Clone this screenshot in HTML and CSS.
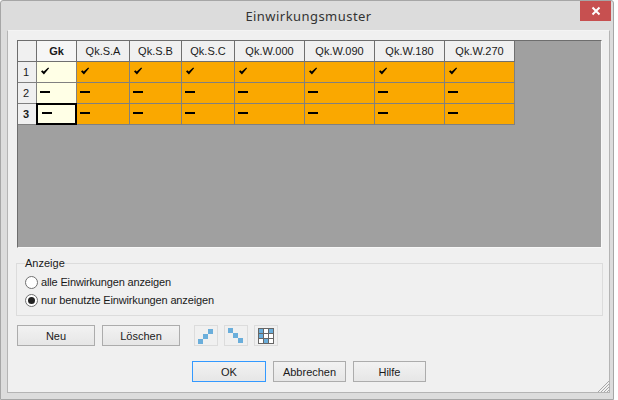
FILE: index.html
```html
<!DOCTYPE html>
<html lang="de">
<head>
  <meta charset="UTF-8">
  <title>Einwirkungsmuster</title>
  <link rel="stylesheet" href="styles.css">
</head>
<body>
  <svg class="defs" width="0" height="0">
    <symbol id="check" viewBox="0 0 10 9">
      <path d="M0.5 5 L2 3.6 L3.6 5.2 L8.6 0.6 L9.6 1.4 L3.8 8.4 Z" fill="#000"/>
    </symbol>
  </svg>

  <div class="window">
    <header class="titlebar">
      <h1>Einwirkungsmuster</h1>
      <button class="close" type="button" aria-label="Schließen">
        <svg width="10" height="10" viewBox="0 0 10 10">
          <path d="M1.5 1.5 L8.5 8.5 M8.5 1.5 L1.5 8.5" stroke="#fff" stroke-width="2"/>
        </svg>
      </button>
    </header>

    <main class="client">
      <div class="grid">
        <div class="cell head"></div>
        <div class="cell head gk">Gk</div>
        <div class="cell head">Qk.S.A</div>
        <div class="cell head">Qk.S.B</div>
        <div class="cell head">Qk.S.C</div>
        <div class="cell head">Qk.W.000</div>
        <div class="cell head">Qk.W.090</div>
        <div class="cell head">Qk.W.180</div>
        <div class="cell head">Qk.W.270</div>

        <div class="cell rowhead">1</div>
        <div class="cell yes"><svg class="tick"><use href="#check"/></svg></div>
        <div class="cell on"><svg class="tick"><use href="#check"/></svg></div>
        <div class="cell on"><svg class="tick"><use href="#check"/></svg></div>
        <div class="cell on"><svg class="tick"><use href="#check"/></svg></div>
        <div class="cell on"><svg class="tick"><use href="#check"/></svg></div>
        <div class="cell on"><svg class="tick"><use href="#check"/></svg></div>
        <div class="cell on"><svg class="tick"><use href="#check"/></svg></div>
        <div class="cell on"><svg class="tick"><use href="#check"/></svg></div>

        <div class="cell rowhead">2</div>
        <div class="cell yes"><span class="dash"></span></div>
        <div class="cell on"><span class="dash"></span></div>
        <div class="cell on"><span class="dash"></span></div>
        <div class="cell on"><span class="dash"></span></div>
        <div class="cell on"><span class="dash"></span></div>
        <div class="cell on"><span class="dash"></span></div>
        <div class="cell on"><span class="dash"></span></div>
        <div class="cell on"><span class="dash"></span></div>

        <div class="cell rowhead current">3</div>
        <div class="cell yes active"><span class="dash"></span></div>
        <div class="cell on"><span class="dash"></span></div>
        <div class="cell on"><span class="dash"></span></div>
        <div class="cell on"><span class="dash"></span></div>
        <div class="cell on"><span class="dash"></span></div>
        <div class="cell on"><span class="dash"></span></div>
        <div class="cell on"><span class="dash"></span></div>
        <div class="cell on"><span class="dash"></span></div>
      </div>

      <fieldset class="group">
        <legend>Anzeige</legend>
        <label class="radio"><span class="dot"></span>alle Einwirkungen anzeigen</label>
        <label class="radio"><span class="dot checked"></span>nur benutzte Einwirkungen anzeigen</label>
      </fieldset>

      <div class="tools">
        <button class="btn" type="button">Neu</button>
        <button class="btn" type="button">Löschen</button>
        <div class="icons">
          <button class="icon" type="button" aria-label="Alle auswählen">
            <svg width="16" height="16" viewBox="0 0 16 16">
              <rect x="0" y="11" width="5" height="5" fill="#6aaedb"/>
              <rect x="5" y="6" width="5" height="5" fill="#6aaedb"/>
              <rect x="10" y="1" width="5" height="5" fill="#6aaedb"/>
            </svg>
          </button>
          <button class="icon" type="button" aria-label="Keine auswählen">
            <svg width="16" height="16" viewBox="0 0 16 16">
              <rect x="0" y="0" width="5" height="5" fill="#6aaedb"/>
              <rect x="5" y="5" width="5" height="5" fill="#6aaedb"/>
              <rect x="10" y="10" width="5" height="5" fill="#6aaedb"/>
            </svg>
          </button>
          <button class="icon" type="button" aria-label="Umkehren">
            <svg width="16" height="16" viewBox="0 0 16 16">
              <rect x="0.5" y="0.5" width="15" height="15" fill="#fff" stroke="#666"/>
              <rect x="1" y="1" width="4" height="4" fill="#6aaedb"/>
              <rect x="11" y="1" width="4" height="4" fill="#6aaedb"/>
              <rect x="1" y="6" width="4" height="4" fill="#6aaedb"/>
              <rect x="6" y="11" width="4" height="4" fill="#6aaedb"/>
              <path d="M5.5 1 V15 M10.5 1 V15 M1 5.5 H15 M1 10.5 H15" stroke="#666"/>
            </svg>
          </button>
        </div>
      </div>

      <footer class="actions">
        <button class="btn wide default" type="button">OK</button>
        <button class="btn wide" type="button">Abbrechen</button>
        <button class="btn wide" type="button">Hilfe</button>
      </footer>

      <svg class="grip" width="11" height="11" viewBox="0 0 11 11">
        <path d="M11 0 L0 11 M11 3 L3 11 M11 6 L6 11 M11 9 L9 11" stroke="#a8a8a8"/>
      </svg>
    </main>
  </div>
</body>
</html>
```

FILE: styles.css
```css
* {
  box-sizing: border-box;
}

html, body {
  margin: 0;
  padding: 0;
  height: 400px;
  overflow: hidden;
  background-color: #fff;
}

body {
  font-family: "Liberation Sans", Arial, sans-serif;
  font-size: 11px;
  color: #1a1a1a;
}

.defs {
  position: absolute;
}

.window {
  position: relative;
  width: 614px;
  height: 400px;
  padding: 0 3px 6px 6px;
  display: flex;
  flex-direction: column;
  background-color: #dcdcdc;
  border: 1px solid #a6a6a6;
  border-radius: 3px 3px 0 0;
}

.titlebar {
  height: 29px;
  flex: none;
  display: flex;
  align-items: center;
  justify-content: center;
}

.titlebar h1 {
  margin: 0;
  font-family: "Noto Sans", sans-serif;
  font-size: 13px;
  font-weight: 400;
  letter-spacing: 0.45px;
  color: #333;
}

.close {
  position: absolute;
  top: 0;
  right: 2px;
  width: 31px;
  height: 20px;
  padding: 0;
  display: flex;
  align-items: center;
  justify-content: center;
  background-color: #c75050;
  border: none;
}

.client {
  position: relative;
  flex: 1;
  padding: 9px 7px 0 9px;
  background-color: #f0f0f0;
  border: 1px solid #b4b4b4;
  border-top-color: #f4f4f4;
}

.grid {
  height: 208px;
  display: grid;
  grid-template-columns: 19px 40px 53px 52px 53px 70px 70px 70px 70px;
  grid-auto-rows: 21px;
  align-content: start;
  background-color: #a0a0a0;
  border: 1px solid #6d6d6d;
  border-right-color: #f8f8f8;
  border-bottom-color: #f8f8f8;
}

.cell {
  display: flex;
  align-items: center;
  padding-left: 3px;
  border-right: 1px solid #808080;
  border-bottom: 1px solid #808080;
}

.head {
  justify-content: center;
  padding-left: 0;
  background-color: #f0f0f0;
  border-right-color: #6f6f6f;
  border-bottom-color: #6f6f6f;
}

.gk {
  font-weight: 700;
  background-color: #f6f6f6;
}

.rowhead {
  background-color: #f0f0f0;
  padding-left: 5px;
}

.current {
  font-weight: 700;
}

.yes {
  background-color: #ffffe6;
}

.on {
  background-color: #faa800;
}

.active {
  border: 2px solid #000;
  margin: -1px 0 0 -1px;
  padding-left: 4px;
}

.tick {
  width: 10px;
  height: 8px;
  margin-bottom: 3px;
}

.dash {
  width: 10px;
  height: 2px;
  margin-bottom: 2px;
  background-color: #000;
}

.group {
  height: 60px;
  margin: 8px -1px 0 -1px;
  padding: 3px 0 0 8px;
  border: 1px solid #dcdcdc;
}

.group legend {
  padding: 0;
  margin-left: 0;
  line-height: 14px;
}

.radio {
  height: 18px;
  display: flex;
  align-items: center;
  gap: 3px;
  letter-spacing: -0.15px;
  white-space: nowrap;
}

.dot {
  width: 13px;
  height: 13px;
  display: flex;
  align-items: center;
  justify-content: center;
  background-color: #fff;
  border: 1px solid #707070;
  border-radius: 50%;
}

.checked::after {
  content: "";
  width: 7px;
  height: 7px;
  background-color: #222;
  border-radius: 50%;
}

.tools {
  margin-top: 9px;
  display: flex;
  gap: 7px;
}

.btn {
  width: 78px;
  height: 21px;
  padding: 0;
  font-family: inherit;
  font-size: 11px;
  color: #1a1a1a;
  background: linear-gradient(#f2f2f2, #e6e6e6);
  border: 1px solid #acacac;
}

.icons {
  display: flex;
  gap: 6px;
  margin-left: 7px;
}

.icon {
  width: 24px;
  height: 21px;
  padding: 2px 0 0 3px;
  display: flex;
  align-items: flex-start;
  justify-content: flex-start;
  background-color: #f0f0f0;
  border: 1px solid #dcdcdc;
}

.actions {
  margin-top: 15px;
  display: flex;
  gap: 7px;
  padding-left: 175px;
}

.wide {
  width: 73px;
}

.default {
  width: 74px;
  border-color: #3399ff;
}

.grip {
  position: absolute;
  right: 0;
  bottom: 0;
}
```
